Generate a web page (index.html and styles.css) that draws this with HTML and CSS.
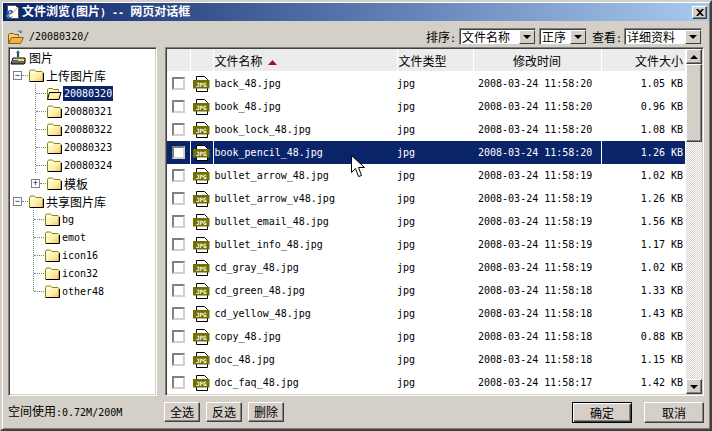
FILE: index.html
```html
<!DOCTYPE html>
<html lang="zh-CN">
<head>
<meta charset="utf-8">
<title>文件浏览(图片) -- 网页对话框</title>
<link rel="stylesheet" href="styles.css">
</head>
<body>

<!-- shared icons -->
<svg class="defs" xmlns="http://www.w3.org/2000/svg">
  <defs>
    <linearGradient id="fold" x1="0" y1="0" x2="1" y2="1">
      <stop offset="0" stop-color="#ffffd8"/>
      <stop offset=".55" stop-color="#fff0a8"/>
      <stop offset="1" stop-color="#f4c070"/>
    </linearGradient>
    <symbol id="folder" viewBox="0 0 16 16">
      <path d="M1.5 14.500V4.500l1-1.500h4l1.500 1.500h6l1 1v9z" fill="url(#fold)" stroke="#84840a"/>
      <path d="M2 14.500h13.500V6" fill="none" stroke="#000"/>
      <path d="M2 5.500h5" stroke="#fff" fill="none"/>
    </symbol>
    <symbol id="folderopen" viewBox="0 0 16 16">
      <path d="M1.500 13.500V4.500l1-1h4l1 1h5v2" fill="#fff8c0" stroke="#84840a"/>
      <path d="M1.500 14.500l2-7h11.500l-2 7z" fill="url(#fold)" stroke="#000"/>
    </symbol>
    <symbol id="jpg" viewBox="0 0 17 16">
      <path d="M3.500.5h8l3 3v12h-11z" fill="#fff" stroke="#000"/>
      <path d="M0 4h16.500v8.500H0z" fill="#707000"/>
      <text x="8.300" y="10.500" text-anchor="middle" class="jpgtext">JPG</text>
    </symbol>
  </defs>
</svg>

<div class="window">

  <div class="titlebar">
    <svg class="ieicon" width="16" height="16" viewBox="0 0 16 16">
      <path d="M2.500 1.500h8l3 3v10h-11z" fill="#fff" stroke="#555"/>
      <text x="1" y="14" class="ieglyph">e</text>
      <path d="M1 12c3 1 9-5 12-9" fill="none" stroke="#e8a020"/>
    </svg>
    <span class="titletext">文件浏览<span class="asc">(</span>图片<span class="asc">) -- </span>网页对话框</span>
    <button class="closebtn" type="button">
      <svg width="8" height="7" viewBox="0 0 8 7"><path d="M0 0h2l2 2 2-2h2L5 3.500 8 7H6L4 5 2 7H0l3-3.500z"/></svg>
    </button>
  </div>

  <div class="toolbar">
    <svg class="openicon" width="16" height="16" viewBox="0 0 16 16">
      <path d="M.5 14.500V5.500l1-1h4l1 1h4v2" fill="#f4d070" stroke="#806020"/>
      <path d="M.5 14.500l3-6h12l-3 6z" fill="#f8b040" stroke="#806020"/>
      <path d="M9 3c1-2 3-2 4-1l1-1v3h-3l1-1c-1-1-2 0-3 0z" fill="#6080b0"/>
    </svg>
    <span class="path">/20080320/</span>
    <div class="sorters">
      <span class="label">排序<span class="asc">:</span></span>
      <div class="combo combo-name"><span>文件名称</span><i class="arrow"></i></div>
      <div class="combo combo-order"><span>正序</span><i class="arrow"></i></div>
      <span class="label label-view">查看<span class="asc">:</span></span>
      <div class="combo combo-view"><span>详细资料</span><i class="arrow"></i></div>
    </div>
  </div>

  <div class="panes">

    <div class="tree sunken">
      <div class="node root">
        <svg class="nodeicon" width="16" height="16" viewBox="0 0 16 16">
          <path d="M6 4l2-3 2 3z" fill="#008080"/>
          <path d="M7 4h2v4H7z" fill="#404040"/>
          <path d="M1 15l2-6h12v5l-1 1z" fill="#d4d0c8" stroke="#000"/>
          <path d="M3 12h12M2 14h12" stroke="#000"/>
          <path d="M8 10h6v2H8z" fill="#ffe040"/>
        </svg>
        <span class="label-text">图片</span>
      </div>

      <div class="node lvl1">
        <i class="box">−</i><i class="dots"></i>
        <svg class="nodeicon"><use href="#folder"/></svg>
        <span class="label-text">上传图片库</span>
      </div>
      <div class="group group-a">
        <div class="node lvl2"><i class="dots"></i><svg class="nodeicon"><use href="#folderopen"/></svg><span class="label-text asc selected">20080320</span></div>
        <div class="node lvl2"><i class="dots"></i><svg class="nodeicon"><use href="#folder"/></svg><span class="label-text asc">20080321</span></div>
        <div class="node lvl2"><i class="dots"></i><svg class="nodeicon"><use href="#folder"/></svg><span class="label-text asc">20080322</span></div>
        <div class="node lvl2"><i class="dots"></i><svg class="nodeicon"><use href="#folder"/></svg><span class="label-text asc">20080323</span></div>
        <div class="node lvl2"><i class="dots"></i><svg class="nodeicon"><use href="#folder"/></svg><span class="label-text asc">20080324</span></div>
        <div class="node lvl2 more"><i class="box">+</i><i class="dots"></i><svg class="nodeicon"><use href="#folder"/></svg><span class="label-text">模板</span></div>
      </div>

      <div class="node lvl1">
        <i class="box">−</i><i class="dots"></i>
        <svg class="nodeicon"><use href="#folder"/></svg>
        <span class="label-text">共享图片库</span>
      </div>
      <div class="group group-b">
        <div class="node lvl3"><i class="dots"></i><svg class="nodeicon"><use href="#folder"/></svg><span class="label-text asc">bg</span></div>
        <div class="node lvl3"><i class="dots"></i><svg class="nodeicon"><use href="#folder"/></svg><span class="label-text asc">emot</span></div>
        <div class="node lvl3"><i class="dots"></i><svg class="nodeicon"><use href="#folder"/></svg><span class="label-text asc">icon16</span></div>
        <div class="node lvl3"><i class="dots"></i><svg class="nodeicon"><use href="#folder"/></svg><span class="label-text asc">icon32</span></div>
        <div class="node lvl3"><i class="dots"></i><svg class="nodeicon"><use href="#folder"/></svg><span class="label-text asc">other48</span></div>
      </div>
    </div>

    <div class="list sunken">
      <table class="files">
        <colgroup>
          <col class="c-check"><col class="c-icon"><col class="c-name"><col class="c-type"><col class="c-time"><col class="c-size">
        </colgroup>
        <thead>
          <tr>
            <th></th><th></th>
            <th class="left">文件名称<svg class="sortmark" width="9" height="5" viewBox="0 0 9 5"><path d="M4.500 0L9 5H0z"/></svg></th>
            <th class="left">文件类型</th>
            <th>修改时间</th>
            <th class="right">文件大小</th>
          </tr>
        </thead>
        <tbody>
          <tr><td><i class="check"></i></td><td><svg class="fileicon"><use href="#jpg"/></svg></td><td>back_48.jpg</td><td>jpg</td><td class="time">2008-03-24 11:58:20</td><td class="right">1.05 KB</td></tr>
          <tr><td><i class="check"></i></td><td><svg class="fileicon"><use href="#jpg"/></svg></td><td>book_48.jpg</td><td>jpg</td><td class="time">2008-03-24 11:58:20</td><td class="right">0.96 KB</td></tr>
          <tr><td><i class="check"></i></td><td><svg class="fileicon"><use href="#jpg"/></svg></td><td>book_lock_48.jpg</td><td>jpg</td><td class="time">2008-03-24 11:58:20</td><td class="right">1.08 KB</td></tr>
          <tr class="current"><td><i class="check"></i></td><td><svg class="fileicon"><use href="#jpg"/></svg></td><td>book_pencil_48.jpg</td><td>jpg</td><td class="time">2008-03-24 11:58:20</td><td class="right">1.26 KB</td></tr>
          <tr><td><i class="check"></i></td><td><svg class="fileicon"><use href="#jpg"/></svg></td><td>bullet_arrow_48.jpg</td><td>jpg</td><td class="time">2008-03-24 11:58:19</td><td class="right">1.02 KB</td></tr>
          <tr><td><i class="check"></i></td><td><svg class="fileicon"><use href="#jpg"/></svg></td><td>bullet_arrow_v48.jpg</td><td>jpg</td><td class="time">2008-03-24 11:58:19</td><td class="right">1.26 KB</td></tr>
          <tr><td><i class="check"></i></td><td><svg class="fileicon"><use href="#jpg"/></svg></td><td>bullet_email_48.jpg</td><td>jpg</td><td class="time">2008-03-24 11:58:19</td><td class="right">1.56 KB</td></tr>
          <tr><td><i class="check"></i></td><td><svg class="fileicon"><use href="#jpg"/></svg></td><td>bullet_info_48.jpg</td><td>jpg</td><td class="time">2008-03-24 11:58:19</td><td class="right">1.17 KB</td></tr>
          <tr><td><i class="check"></i></td><td><svg class="fileicon"><use href="#jpg"/></svg></td><td>cd_gray_48.jpg</td><td>jpg</td><td class="time">2008-03-24 11:58:19</td><td class="right">1.02 KB</td></tr>
          <tr><td><i class="check"></i></td><td><svg class="fileicon"><use href="#jpg"/></svg></td><td>cd_green_48.jpg</td><td>jpg</td><td class="time">2008-03-24 11:58:18</td><td class="right">1.33 KB</td></tr>
          <tr><td><i class="check"></i></td><td><svg class="fileicon"><use href="#jpg"/></svg></td><td>cd_yellow_48.jpg</td><td>jpg</td><td class="time">2008-03-24 11:58:18</td><td class="right">1.43 KB</td></tr>
          <tr><td><i class="check"></i></td><td><svg class="fileicon"><use href="#jpg"/></svg></td><td>copy_48.jpg</td><td>jpg</td><td class="time">2008-03-24 11:58:18</td><td class="right">0.88 KB</td></tr>
          <tr><td><i class="check"></i></td><td><svg class="fileicon"><use href="#jpg"/></svg></td><td>doc_48.jpg</td><td>jpg</td><td class="time">2008-03-24 11:58:18</td><td class="right">1.15 KB</td></tr>
          <tr><td><i class="check"></i></td><td><svg class="fileicon"><use href="#jpg"/></svg></td><td>doc_faq_48.jpg</td><td>jpg</td><td class="time">2008-03-24 11:58:17</td><td class="right">1.42 KB</td></tr>
        </tbody>
      </table>
      <div class="scrollbar">
        <div class="sbtn"><i class="tri-up"></i></div>
        <div class="thumb"></div>
        <div class="track"></div>
        <div class="sbtn"><i class="tri-down"></i></div>
      </div>
    </div>

  </div>

  <div class="footer">
    <div class="usage">空间使用<span class="asc">:0.72M/200M</span></div>
    <div class="leftbtns">
      <button class="btn" type="button">全选</button>
      <button class="btn" type="button">反选</button>
      <button class="btn" type="button">删除</button>
    </div>
    <div class="rightbtns">
      <button class="btn wide default" type="button">确定</button>
      <button class="btn wide" type="button">取消</button>
    </div>
  </div>

  <!-- mouse pointer in the capture -->
  <svg class="pointer" width="14" height="23" viewBox="0 0 14 23">
    <path d="M.5.5v17l4-4 3 8 3-1-3-8h6z" fill="#fff" stroke="#000"/>
  </svg>
</div>

</body>
</html>
```

FILE: styles.css
```css
html, body {
  margin: 0;
  padding: 0;
}

body {
  width: 712px;
  height: 431px;
  overflow: hidden;
  color: #000;
  background-color: #d4d0c8;
  font-family: "Noto Sans CJK SC", sans-serif;
  font-size: 12px;
}

.defs {
  position: absolute;
  width: 0;
  height: 0;
}

.asc {
  font-family: "DejaVu Sans Mono", "Liberation Mono", monospace;
  font-size: 10px;
}

.window {
  position: relative;
  box-sizing: border-box;
  width: 712px;
  height: 431px;
  display: flex;
  flex-direction: column;
  padding: 1px;
  border: 2px solid;
  border-color: #d4d0c8 #404040 #404040 #d4d0c8;
  box-shadow: inset 1px 1px 0 #fff, inset -1px -1px 0 #808080;
}

/* Title bar */
.titlebar {
  flex: none;
  height: 18px;
  display: flex;
  align-items: center;
  padding: 0 2px;
  color: #fff;
  font-weight: bold;
  background: linear-gradient(to right, #0a246a, #a6caf0);
}

.titlebar .asc {
  font-weight: bold;
}

.ieicon {
  flex: none;
  margin-right: 1px;
}

.ieglyph {
  font-family: "Liberation Serif", serif;
  font-size: 16px;
  font-weight: bold;
  font-style: italic;
  fill: #1c50c8;
}

.titletext {
  line-height: 18px;
}

.closebtn {
  box-sizing: border-box;
  width: 15px;
  height: 13px;
  margin: 0 0 0 auto;
  padding: 0;
  display: flex;
  align-items: center;
  justify-content: center;
  background-color: #d4d0c8;
  border: 1px solid;
  border-color: #fff #404040 #404040 #fff;
  box-shadow: inset -1px -1px 0 #808080;
}

/* Toolbar */
.toolbar {
  flex: none;
  box-sizing: border-box;
  height: 26px;
  display: flex;
  align-items: center;
  padding: 5px 7px 0 5px;
}

.path {
  margin-left: 5px;
  font-family: "DejaVu Sans Mono", "Liberation Mono", monospace;
  font-size: 10px;
}

.sorters {
  margin-left: auto;
  display: flex;
  align-items: center;
}

.label {
  margin-right: 3px;
}

.label-view {
  margin: 0 2px 0 5px;
}

.combo {
  box-sizing: border-box;
  height: 17px;
  display: flex;
  align-items: center;
  justify-content: space-between;
  padding-left: 2px;
  background-color: #fff;
  border: 1px solid;
  border-color: #808080 #d4d0c8 #d4d0c8 #808080;
  box-shadow: inset 1px 1px 0 #404040;
  line-height: 14px;
}

.combo-name {
  width: 77px;
  margin-right: 3px;
}

.combo-order {
  width: 48px;
}

.combo-view {
  width: 78px;
}

.arrow {
  flex: none;
  box-sizing: border-box;
  width: 16px;
  height: 14px;
  margin-top: 1px;
  display: flex;
  align-items: center;
  justify-content: center;
  background-color: #d4d0c8;
  border: 1px solid;
  border-color: #fff #404040 #404040 #fff;
}

.arrow::after,
.tri-down {
  content: "";
  width: 0;
  height: 0;
  border-left: 4px solid transparent;
  border-right: 4px solid transparent;
  border-top: 4px solid #000;
}

.tri-up {
  width: 0;
  height: 0;
  border-left: 4px solid transparent;
  border-right: 4px solid transparent;
  border-bottom: 4px solid #000;
}

/* Panes */
.panes {
  flex: none;
  height: 349px;
  display: flex;
  gap: 8px;
  padding: 0 5px;
}

.sunken {
  box-sizing: border-box;
  height: 349px;
  background-color: #fff;
  border: 1px solid;
  border-color: #808080 #fff #fff #808080;
  box-shadow: inset 1px 1px 0 #404040, inset -1px -1px 0 #d4d0c8;
}

/* Tree */
.tree {
  width: 149px;
  padding: 0 1px;
  flex: none;
}

.node {
  height: 18px;
  display: flex;
  align-items: center;
}

.nodeicon {
  flex: none;
  width: 16px;
  height: 16px;
}

.label-text {
  margin-left: 1px;
  padding: 0 1px;
  line-height: 15px;
}

.root .label-text {
  margin-left: 2px;
}

.lvl1 {
  padding-left: 3px;
}

.lvl2 {
  padding-left: 26px;
}

.lvl3 {
  padding-left: 24px;
}

.box {
  flex: none;
  box-sizing: border-box;
  width: 9px;
  height: 9px;
  display: flex;
  align-items: center;
  justify-content: center;
  border: 1px solid #808080;
  background-color: #fff;
  font-family: "Liberation Sans", sans-serif;
  font-size: 9px;
  font-style: normal;
  line-height: 7px;
}

.dots {
  flex: none;
  width: 10px;
  height: 0;
  border-top: 1px dotted #808080;
}

.lvl1 .dots {
  width: 6px;
}

.more {
  padding-left: 21px;
}

.more .dots {
  width: 6px;
}

.group {
  background-image: repeating-linear-gradient(to bottom, #808080 0 1px, transparent 1px 2px);
  background-repeat: no-repeat;
}

.group-a {
  background-position: 25px 0;
  background-size: 1px calc(100% - 18px);
}

.group-b {
  background-position: 23px 0;
  background-size: 1px calc(100% - 9px);
}

.selected {
  color: #fff;
  background-color: #0a246a;
}

/* File list */
.list {
  width: 539px;
  padding: 1px;
  display: flex;
  gap: 1px;
  flex: none;
}

.files {
  flex: none;
  width: 518px;
  height: 344px;
  table-layout: fixed;
  border-collapse: collapse;
  font-family: "DejaVu Sans Mono", "Liberation Mono", monospace;
  font-size: 10px;
}

.c-check { width: 23px; }
.c-icon { width: 23px; }
.c-name { width: 184px; }
.c-type { width: 76px; }
.c-time { width: 128px; }
.c-size { width: 84px; }

.files th {
  height: 22px;
  padding: 0 1px;
  background-color: #ececec;
  border-right: 1px solid #fff;
  border-bottom: 1px solid #fff;
  font-family: "Noto Sans CJK SC", sans-serif;
  font-size: 12px;
  font-weight: normal;
  white-space: nowrap;
}

.files th.left {
  text-align: left;
}

.files th.right,
.files td.right {
  padding-right: 2px;
  text-align: right;
  border-right: none;
}

.sortmark {
  margin-left: 5px;
  vertical-align: 1px;
  fill: #a01030;
}

.files td {
  height: 23px;
  padding: 0 1px;
  white-space: nowrap;
}

.files td:nth-child(1),
.files td:nth-child(2) {
  padding: 0;
  text-align: center;
  border-right: 1px solid #fff;
}

.files td:nth-child(4) {
  padding-left: 0;
}

.files td.time {
  padding-left: 5px;
}

.check {
  display: block;
  box-sizing: border-box;
  width: 13px;
  height: 13px;
  margin: 0 auto;
  background-color: #fff;
  border: 2px solid;
  border-color: #808080 #d4d0c8 #d4d0c8 #808080;
}

.fileicon {
  display: block;
  width: 17px;
  height: 16px;
  margin: 0 auto;
}

.jpgtext {
  font-family: "DejaVu Sans Mono", monospace;
  font-size: 6px;
  font-weight: bold;
  fill: #fff;
}

.current td {
  color: #fff;
  background-color: #0a246a;
}

.current td:nth-child(5) {
  border-right: 1px solid #fff;
}

/* Scrollbar */
.scrollbar {
  flex: none;
  width: 16px;
  height: 345px;
  display: flex;
  flex-direction: column;
}

.sbtn {
  flex: none;
  box-sizing: border-box;
  height: 15px;
  display: flex;
  align-items: center;
  justify-content: center;
  background-color: #d4d0c8;
  border: 1px solid;
  border-color: #fff #404040 #404040 #fff;
  box-shadow: inset -1px -1px 0 #808080;
}

.thumb {
  flex: none;
  box-sizing: border-box;
  height: 78px;
  background-color: #d4d0c8;
  border: 1px solid;
  border-color: #fff #404040 #404040 #fff;
  box-shadow: inset -1px -1px 0 #808080;
}

.track {
  flex: 1;
  background: repeating-conic-gradient(#d4d0c8 0 25%, #fff 0 50%) 0 0 / 2px 2px;
}

/* Footer */
.footer {
  flex: 1;
  display: flex;
  align-items: flex-start;
  padding: 6px 5px 0;
}

.usage {
  flex: none;
  width: 156px;
  line-height: 18px;
}

.leftbtns {
  display: flex;
  gap: 6px;
}

.rightbtns {
  margin-left: auto;
  display: flex;
  gap: 12px;
}

.btn {
  box-sizing: border-box;
  width: 36px;
  height: 20px;
  padding: 0;
  background-color: #d4d0c8;
  color: #000;
  border: 1px solid;
  border-color: #fff #404040 #404040 #fff;
  box-shadow: inset -1px -1px 0 #808080;
  font-family: "Noto Sans CJK SC", sans-serif;
  font-size: 12px;
  line-height: 16px;
}

.wide {
  width: 60px;
  height: 21px;
}

.default {
  border: 1px solid #000;
  box-shadow: inset 1px 1px 0 #fff, inset -1px -1px 0 #404040, inset -2px -2px 0 #808080;
}

.pointer {
  position: absolute;
  left: 349px;
  top: 153px;
}
```
